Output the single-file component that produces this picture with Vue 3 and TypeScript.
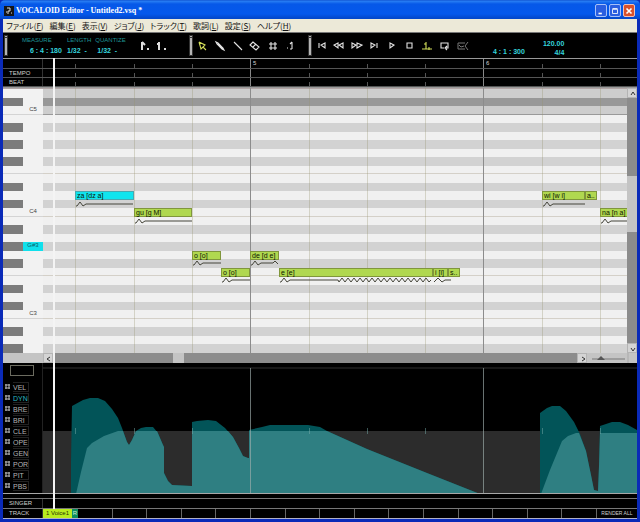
<script setup lang="ts">
interface Note { text: string; beat: number; length: number; row: number; selected?: boolean }

const BEAT = 58.3
const ORIGIN = 32.4
const beatX = (beat: number): number => Math.round(ORIGIN + beat * BEAT)

const menus = [
  { label: 'ファイル', key: 'F' }, { label: '編集', key: 'E' }, { label: '表示', key: 'V' },
  { label: 'ジョブ', key: 'J' }, { label: 'トラック', key: 'T' }, { label: '歌詞', key: 'L' },
  { label: '設定', key: 'S' }, { label: 'ヘルプ', key: 'H' },
]

const tools = [
  { name: 'Arrow', d: 'M3 3L5 10L7 8L10 11M7 8L9 6L3 3', tint: true },
  { name: 'Pencil', d: 'M3 3L5 4L10 9L11 11L9 10L4 5ZM5 5L10 10' },
  { name: 'Line', d: 'M3 3L11 11' },
  { name: 'Eraser', d: 'M5 3L2 6L8 11L11 8ZM5 8L8 5' },
  { name: 'Grid', d: 'M5 3V11M9 3V11M3 5H11M3 9H11' },
  { name: 'Note', d: 'M9 3V10M7 10H9M4 9H5M7 5L9 3' },
]
const transport = [
  { name: 'To start', d: 'M4 4V9M10 4L6 6L10 9Z' },
  { name: 'Rewind', d: 'M6 4L2 6L6 9ZM11 4L7 6L11 9Z' },
  { name: 'Forward', d: 'M2 4L6 6L2 9ZM7 4L12 6L7 9Z' },
  { name: 'To end', d: 'M4 4L8 6L4 9ZM10 4V9' },
  { name: 'Play', d: 'M5 4L9 6L5 9Z' },
  { name: 'Stop', d: 'M4 4H9V9H4Z' },
  { name: 'Auto scroll', d: 'M6 3V10M2 10H12M4 5H6M9 8V11', tint: true },
  { name: 'Loop', d: 'M6 9H3V4H10V9H8M9 7L7 9L9 11' },
  { name: 'Mute', d: 'M9 4H2V10H9M3 6L5 8L8 7M12 3L9 7L12 11', dim: true },
]

const pitchNames = ['C', 'C#', 'D', 'D#', 'E', 'F', 'F#', 'G', 'G#', 'A', 'A#', 'B']
const rows = Array.from({ length: 31 }, (_, i) => {
  const pitch = 62 - i
  const name = pitchNames[pitch % 12]
  const octave = Math.floor(pitch / 12)
  return {
    id: pitch,
    black: name.includes('#'),
    line: name === 'C' || name === 'F',
    high: i < 3,
    current: i === 18,
    label: name === 'C' ? `C${octave}` : i === 18 ? 'G#3' : '',
  }
})

const notes: Note[] = [
  { text: 'za [dz a]', beat: 0, length: 1, row: 12, selected: true },
  { text: 'gu [g M]', beat: 1, length: 1, row: 14 },
  { text: 'o [o]', beat: 2, length: 0.5, row: 19 },
  { text: 'o [o]', beat: 2.5, length: 0.5, row: 21 },
  { text: 'de [d e]', beat: 3, length: 0.5, row: 19 },
  { text: 'e [e]', beat: 3.5, length: 2.64, row: 21 },
  { text: 'i [i]', beat: 6.14, length: 0.25, row: 21 },
  { text: 's..', beat: 6.39, length: 0.2, row: 21 },
  { text: 'wi [w i]', beat: 8, length: 0.74, row: 12 },
  { text: 'a..', beat: 8.74, length: 0.2, row: 12 },
  { text: 'na [n a]', beat: 9, length: 1, row: 14 },
]
const zigzag = Array.from({ length: 31 }, (_, i) => `L${60 + i * 3} ${i % 2 ? 2 : 6}`).join('')
const bend = 'M1 6H2L5 2L8 6L11 4'
const curves = [
  { beat: 0, row: 13, d: `${bend}H58` },
  { beat: 1, row: 15, d: `${bend}H58` },
  { beat: 2, row: 20, d: `${bend}H29` },
  { beat: 2.5, row: 22, d: `${bend}H29` },
  { beat: 3, row: 20, d: `${bend}H23L25 2L28 5` },
  { beat: 3.5, row: 22, d: `${bend}H59${zigzag}L152 4` },
  { beat: 6.14, row: 22, d: 'M1 6L5 2L9 6L12 4H18' },
  { beat: 8, row: 13, d: `${bend}H43` },
  { beat: 9, row: 15, d: `${bend}H27` },
]
const beats = Array.from({ length: 10 }, (_, i) => ({ x: beatX(i), bar: i === 3 ? '5' : i === 7 ? '6' : '' }))
const rowTop = (row: number): string => `calc(1px + (100% - 1px) * ${row / 31})`
const params = ['VEL', 'DYN', 'BRE', 'BRI', 'CLE', 'OPE', 'GEN', 'POR', 'PIT', 'PBS']
const rulerLanes = ['TEMPO', 'BEAT']
const emptyTracks = 15
</script>

<template>
  <main class="window">
    <header class="titlebar">
      <svg class="app-icon" viewBox="0 0 10 10" aria-hidden="true"><rect width="10" height="10" fill="#161616" /><path d="M3 2H6V5H4V8M7 7H8M2 6H3" stroke="#ddd" fill="none" /></svg>
      <h1>VOCALOID Editor - Untitled2.vsq *</h1>
      <button class="win" aria-label="Minimize"><svg viewBox="0 0 12 12"><path d="M3 9H7" stroke="#fff" stroke-width="2" /></svg></button>
      <button class="win" aria-label="Maximize"><svg viewBox="0 0 12 12"><path d="M3 4H9V9H3ZM3 3H9" fill="none" stroke="#fff" /></svg></button>
      <button class="win close" aria-label="Close"><svg viewBox="0 0 12 12"><path d="M3 3L9 9M9 3L3 9" stroke="#fff" stroke-width="2" /></svg></button>
    </header>

    <nav class="menubar">
      <button v-for="m in menus" :key="m.key">{{ m.label }}(<u>{{ m.key }}</u>)</button>
    </nav>

    <section class="toolbar">
      <div class="group readout">
        <i class="grip"></i>
        <dl class="measure"><dt>MEASURE</dt><dd>6 : 4 : 180</dd></dl>
        <dl><dt>LENGTH</dt><dd>1/32 &nbsp;-</dd></dl>
        <dl class="quantize"><dt>QUANTIZE</dt><dd>1/32 &nbsp;-</dd></dl>
        <svg class="values" viewBox="0 0 30 14" aria-hidden="true">
          <path d="M3 3V11M3 3L6 6M20 3V11M18 5H20" stroke="#ddd" stroke-width="2" fill="none" /><path d="M8 10H10M25 10H27" stroke="#ddd" stroke-width="2" />
        </svg>
      </div>
      <div class="group edit">
        <i class="grip"></i>
        <div class="icons">
          <button v-for="t in tools" :key="t.name" :aria-label="t.name" :class="{ tint: t.tint }"><svg viewBox="0 0 14 14"><path :d="t.d" /></svg></button>
        </div>
      </div>
      <div class="group transport">
        <i class="grip"></i>
        <div class="icons">
          <button v-for="t in transport" :key="t.name" :aria-label="t.name" :class="{ tint: t.tint, dim: t.dim }"><svg viewBox="0 0 14 14"><path :d="t.d" /></svg></button>
        </div>
      </div>
      <div class="position">4 : 1 : 300</div>
      <div class="tempo"><span>120.00</span><span>4/4</span></div>
    </section>

    <section class="sequencer">
      <div class="ruler">
        <div class="ruler-row numbers">
          <span class="head"></span>
          <div class="lane"><i v-for="b in beats" :key="b.x" :class="{ bar: b.bar }" :style="{ left: b.x + 'px' }">{{ b.bar }}</i></div>
        </div>
        <div v-for="l in rulerLanes" :key="l" class="ruler-row">
          <span class="head">{{ l }}</span>
          <div class="lane"><i v-for="b in beats" :key="b.x" :class="{ bar: b.bar }" :style="{ left: b.x + 'px' }"></i></div>
        </div>
      </div>

      <div class="roll">
        <div class="keys">
          <div v-for="r in rows" :key="r.id" class="key" :class="{ black: r.black, current: r.current, line: r.line }"><i></i><span>{{ r.label }}</span></div>
        </div>
        <div class="canvas">
          <div class="stripes"><div v-for="r in rows" :key="r.id" :class="{ black: r.black, line: r.line, high: r.high }"></div></div>
          <i v-for="b in beats" :key="b.x" class="beat" :class="{ bar: b.bar }" :style="{ left: b.x + 'px' }"></i>
          <svg v-for="(c, i) in curves" :key="'c' + i" class="curve" :style="{ left: beatX(c.beat) + 'px', top: rowTop(c.row) }"><path :d="c.d" /></svg>
          <div v-for="(n, i) in notes" :key="'n' + i" class="note" :class="{ selected: n.selected }" :style="{ left: beatX(n.beat) + 'px', top: rowTop(n.row), width: beatX(n.beat + n.length) - beatX(n.beat) + 'px' }">{{ n.text }}</div>
        </div>
        <div class="vscroll">
          <button aria-label="Scroll up"><svg viewBox="0 0 10 10"><path d="M3 6L5 3L7 6" /></svg></button>
          <div class="vtrack"><i class="thumb"></i></div>
          <button aria-label="Scroll down"><svg viewBox="0 0 10 10"><path d="M3 4L5 7L7 4" /></svg></button>
        </div>
      </div>

      <div class="hscroll">
        <span class="pad"></span>
        <button aria-label="Scroll left"><svg viewBox="0 0 10 10"><path d="M6 3L3 5L6 7" /></svg></button>
        <div class="track"><i></i></div>
        <button aria-label="Scroll right"><svg viewBox="0 0 10 10"><path d="M4 3L7 5L4 7" /></svg></button>
        <svg class="zoom" viewBox="0 0 50 10" aria-hidden="true"><path d="M5 6H38" stroke="#777" /><path d="M10 7L14 3L18 7Z" fill="#555" /><path d="M41 0V10" stroke="#aaa" /></svg>
      </div>

      <div class="control">
        <div class="params">
          <div class="value-box"></div>
          <button v-for="p in params" :key="p" :class="{ active: p === 'DYN' }">
            <svg viewBox="0 0 7 7"><path d="M1 2H6M1 5H6M2 1V6M5 1V6" /></svg><span>{{ p }}</span>
          </button>
        </div>
        <svg class="graph" viewBox="0 0 594 130" preserveAspectRatio="none" aria-hidden="true">
          <rect y="68" width="594" height="62" fill="#2c2c2c" />
          <g transform="translate(-43 -363)">
            <path fill="#025458" d="M71 494V461L72 406L83 400L90 398H98L105 401L112 409L118 418L122 428L127 442L129 445L132 440L136 431L141 428L146 427H153L158 433L163 445L164 447V473L168 481L172 485L192 486V422L197 421L208 420L216 421L225 428L233 437L239 448L243 456L248 458H249V430L262 427L270 425H308L320 427L327 431L367 449L427 473L480 494ZM540 494V413L547 408L552 406H560L566 411L574 422L580 434L586 451L591 475L594 490L598 491L599 466L600 426L606 424L612 422H620L628 425L637 430V494Z" />
            <path fill="#2f7f82" d="M76 494L81 472L87 448L92 443L104 436L118 431H123L127 442L129 445L132 440L136 431H157L163 445L164 447V473L168 481L172 485L192 486V431H228L233 437L239 448L243 456L248 458H249V431H327L367 449L427 473L480 494ZM541 494L550 470L562 441L568 436L576 433H579L586 451L591 475L594 490L598 491L599 466L600 433H637V494Z" />
          </g>
          <path d="M0 5H594" stroke="#303030" />
          <path v-for="b in beats" :key="b.x" :d="b.bar ? `M${b.x}.5 5V130` : `M${b.x}.5 65V71`" :stroke="b.bar ? '#a0b0ae' : '#77aaa8'" :opacity="b.bar ? 0.65 : 0.5" />
        </svg>
      </div>

      <div class="foot gap"></div>
      <div class="foot"><span class="head">SINGER</span></div>
      <div class="foot tracks">
        <span class="head">TRACK</span>
        <button class="voice">1 Voice1</button><button class="render" aria-label="Render">R</button>
        <i v-for="n in emptyTracks" :key="n" class="slot"></i>
        <button class="all">RENDER ALL</button>
      </div>
      <i class="playhead"></i>
    </section>
  </main>
</template>

<style>
body { background: #0a2ab8; }
</style>

<style scoped>
* { box-sizing: border-box; }
button { border: 0; padding: 0; margin: 0; background: none; font: inherit; color: inherit; display: grid; place-items: center; white-space: nowrap; }
svg { display: block; }
.window { height: 100vh; display: flex; flex-direction: column; padding: 0 3px 3px; background: #0a2ab8; font-family: "Liberation Sans", "Noto Sans CJK JP", sans-serif; font-size: 7px; overflow: hidden; }
.titlebar { flex: none; height: 19px; margin: 0 -3px; padding: 2px 5px 0 4px; display: flex; align-items: center; gap: 2px; background: linear-gradient(#0a48c8 0, #2a80f4 1px, #0658e8 4px, #0458ec 14px, #0348cc 18px); border-radius: 5px 5px 0 0; }
.app-icon { width: 10px; height: 10px; }
h1 { flex: 1; margin: 0; color: #fff; font: bold 8px/12px "Liberation Serif", serif; white-space: nowrap; }
.win { width: 12px; height: 13px; border: 1px solid #a6c0f8; border-radius: 2px; background: #2a5ee0; }
.win svg { width: 10px; height: 10px; }
.win.close { background: #d8512c; border-color: #f0c0b4; }
.menubar { flex: none; height: 13px; display: flex; align-items: center; gap: 6px; padding: 0 3px; background: #ece9d8; color: #111; font: 8px/12px "Noto Sans CJK JP", sans-serif; font-feature-settings: "palt"; }
.menubar button { display: block; }

.toolbar { flex: none; height: 26px; display: flex; background: #000; color: #35d4dc; border-top: 1px solid #777; }
.group { display: flex; align-items: center; gap: 2px; padding-left: 1px; }
.icons { flex: 1; display: flex; justify-content: space-between; }
.icons button { width: 15px; height: 15px; }
.icons svg { width: 14px; height: 14px; fill: none; stroke: #e4e4e4; stroke-width: 1.1; }
.icons .tint svg { stroke: #d4e05a; }
.icons .dim svg { stroke: #777; stroke-width: 1; }
.grip { flex: none; width: 4px; height: 21px; background: #b4b4b4; border-top: 3px double #333; outline: 1px solid #333; outline-offset: -1px; }
.readout { width: 185px; gap: 4px; }
.edit { width: 110px; }
.transport { width: 163px; margin-left: 9px; }
dl { margin: 0; display: flex; flex-direction: column; gap: 3px; align-items: flex-start; }
dt { font-size: 6px; line-height: 8px; color: #1f9496; white-space: nowrap; }
dd { margin: 0; font-size: 7px; font-weight: bold; line-height: 8px; white-space: nowrap; }
.measure { width: 51px; padding-left: 10px; }
.measure dd { padding-left: 8px; }
.quantize dd { padding-left: 2px; }
.values { width: 30px; height: 14px; margin-left: 9px; }
.position { margin-left: 23px; align-self: flex-end; font-weight: bold; line-height: 12px; white-space: nowrap; }
.tempo { margin-left: 18px; padding-top: 6px; display: flex; flex-direction: column; align-items: flex-end; font-weight: bold; line-height: 9px; }

.sequencer { position: relative; flex: 1; min-height: 0; display: flex; flex-direction: column; background: #000; color: #d0d0d0; }
.playhead { position: absolute; left: 50px; top: 0; bottom: 10px; width: 2px; background: #f4f4f4; }
.head { flex: none; width: 40px; padding-left: 6px; font-size: 6px; line-height: 9px; border-right: 1px solid #333; white-space: nowrap; }
.ruler { flex: none; border-top: 1px solid #999; border-bottom: 1px solid #999; }
.ruler-row { display: flex; height: 9px; border-bottom: 1px solid #555; }
.ruler-row.numbers { height: 10px; }
.lane { position: relative; flex: 1; overflow: hidden; }
.lane i { position: absolute; bottom: 0; height: 4px; border-left: 1px solid #555; font-style: normal; }
.lane i.bar { height: 9px; padding-left: 2px; border-color: #888; font-size: 6px; line-height: 9px; }

.roll { flex: 1; min-height: 0; display: flex; }
.keys, .stripes { display: grid; grid-template-rows: repeat(31, 1fr); border-top: 1px solid #b0a4a4; }
.keys { flex: none; width: 40px; background: #f2f2f2; }
.key { display: grid; grid-template-columns: 20px 20px; min-height: 0; }
.key.black i { background: #7c7c7c; }
.key span { color: #444; font-size: 6px; line-height: 7px; text-align: center; }
.key.current span { background: #10e0ec; color: #0b5c68; }
.key.line { border-bottom: 1px solid #d4d4d4; }
.canvas { position: relative; flex: 1; overflow: hidden; }
.stripes { height: 100%; }
.stripes div { background: #f0f0f0; }
.stripes .line { border-bottom: 1px solid #d4d0c8; }
.stripes .black { background: #d2d2d2; }
.stripes .high { background: #cdcdcd; }
.stripes .high.black { background: #989898; }
.stripes .high.line { border-color: #999; }
.beat { position: absolute; top: 0; bottom: 0; border-left: 1px solid rgba(150, 145, 110, 0.32); }
.beat.bar { border-color: #8c8c8c; }
.note { position: absolute; height: 9px; padding-left: 1px; background: #b0d850; border: 1px solid #80963c; color: #0c1400; font-size: 7px; line-height: 7px; white-space: nowrap; }
.note.selected { background: #10e4ee; border-color: #48a8b0; }
.curve { position: absolute; width: 160px; height: 9px; fill: none; stroke: #45453a; }
.vscroll { flex: none; width: 10px; display: flex; flex-direction: column; }
.vtrack { flex: 1; padding-top: 78px; background: #8c8c8c; }
.vscroll button, .hscroll button { flex: none; width: 10px; height: 10px; background: #d4d4d4; border: 1px solid #b4b4b4; }
.vscroll .thumb { display: block; height: 56px; background: #c4c4c4; }
.vscroll svg, .hscroll button svg { width: 10px; height: 10px; fill: none; stroke: #333; }

.hscroll { flex: none; height: 10px; display: flex; background: #c4c4c4; }
.pad { width: 40px; }
.track { flex: 1; background: #8c8c8c; padding-left: 120px; }
.track i { display: block; width: 11px; height: 10px; background: #c4c4c4; }
.zoom { width: 50px; height: 10px; }

.control { flex: none; height: 131px; display: flex; border-bottom: 1px solid #a8a8a8; }
.params { flex: none; width: 40px; padding: 2px 0 0 1px; border-right: 1px solid #222; }
.value-box { width: 24px; height: 11px; margin: 0 0 5px 6px; border: 1px solid #6c6c60; }
.params button { width: 32px; height: 11px; display: flex; align-items: center; gap: 2px; font-size: 7px; line-height: 11px; color: #b4b4b4; }
.params button span { width: 16px; height: 10px; line-height: 9px; border: 1px solid #222; border-left: 0; text-align: left; }
.params svg { width: 7px; height: 7px; stroke: #bbb; }
.params .active { color: #28b8c0; }
.graph { flex: 1; min-width: 0; height: 130px; }

.foot { flex: none; display: flex; height: 10px; border-bottom: 1px solid #777; }
.foot.gap { height: 5px; }
.tracks { border-bottom-color: #b0b0c8; }
.voice { width: 29px; background: #b8ec20; color: #243000; font-size: 6px; line-height: 9px; }
.render { width: 6px; background: #0c8c60; color: #d0f0d0; font-size: 6px; line-height: 9px; }
.slot { flex: 1; border-right: 1px solid #666; }
.all { width: 40px; font-size: 5px; line-height: 9px; }
</style>
